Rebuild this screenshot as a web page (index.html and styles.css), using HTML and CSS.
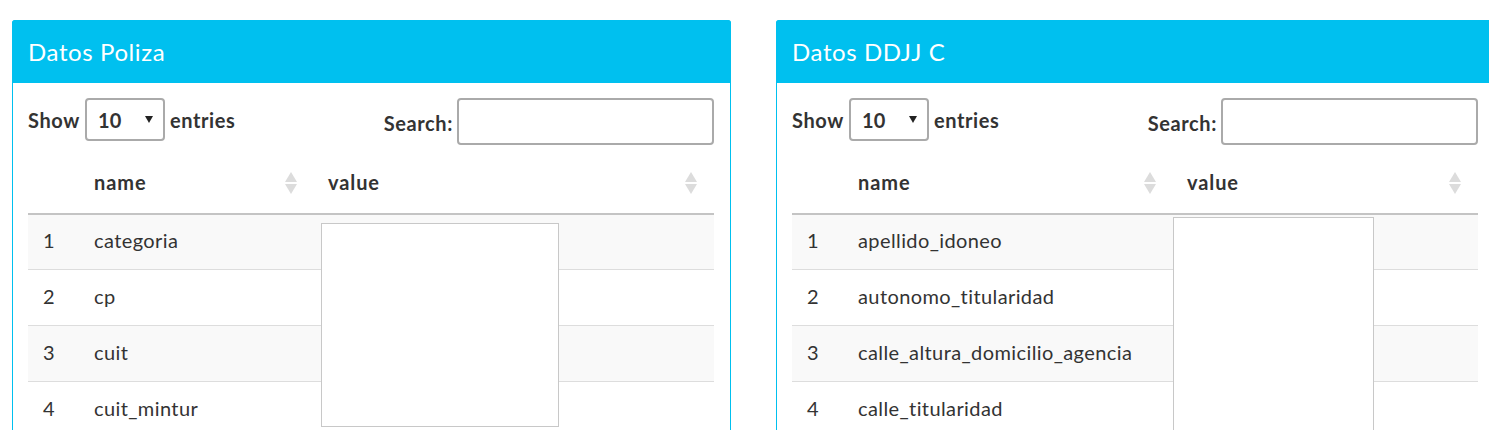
FILE: index.html
```html
<!DOCTYPE html>
<html lang="es">
<head>
<meta charset="utf-8">
<title>Datos</title>
<link rel="stylesheet" href="styles.css">
</head>
<body>
<div class="page">
  <section class="box box-a">
    <div class="box-header"><h3 class="box-title">Datos Poliza</h3></div>
    <div class="box-body">
      <div class="dt-top">
        <label class="dt-length">Show <span class="select">10 <svg class="caret" width="8" height="7" viewBox="0 0 8 7"><path d="M0 0H8L4 7Z"/></svg></span> entries</label>
        <label class="dt-search">Search: <span class="search-input"></span></label>
      </div>
      <div class="table-wrap">
        <table class="dt">
          <colgroup><col class="c-idx"><col class="c-name-a"><col class="c-val"></colgroup>
          <thead>
            <tr><th></th><th class="sortable">name<svg class="sort" width="12" height="22" viewBox="0 0 12 22"><path d="M6 0L12 10H0Z"/><path d="M0 12H12L6 22Z"/></svg></th><th class="sortable">value<svg class="sort" width="12" height="22" viewBox="0 0 12 22"><path d="M6 0L12 10H0Z"/><path d="M0 12H12L6 22Z"/></svg></th></tr>
          </thead>
          <tbody>
            <tr class="odd"><td>1</td><td>categoria</td><td></td></tr>
            <tr><td>2</td><td>cp</td><td></td></tr>
            <tr class="odd"><td>3</td><td>cuit</td><td></td></tr>
            <tr><td>4</td><td>cuit_mintur</td><td></td></tr>
          </tbody>
        </table>
        <div class="widget widget-a"></div>
      </div>
    </div>
  </section>
  <section class="box box-b">
    <div class="box-header"><h3 class="box-title">Datos DDJJ C</h3></div>
    <div class="box-body">
      <div class="dt-top">
        <label class="dt-length">Show <span class="select">10 <svg class="caret" width="8" height="7" viewBox="0 0 8 7"><path d="M0 0H8L4 7Z"/></svg></span> entries</label>
        <label class="dt-search">Search: <span class="search-input"></span></label>
      </div>
      <div class="table-wrap">
        <table class="dt">
          <colgroup><col class="c-idx"><col class="c-name-b"><col class="c-val"></colgroup>
          <thead>
            <tr><th></th><th class="sortable">name<svg class="sort" width="12" height="22" viewBox="0 0 12 22"><path d="M6 0L12 10H0Z"/><path d="M0 12H12L6 22Z"/></svg></th><th class="sortable">value<svg class="sort" width="12" height="22" viewBox="0 0 12 22"><path d="M6 0L12 10H0Z"/><path d="M0 12H12L6 22Z"/></svg></th></tr>
          </thead>
          <tbody>
            <tr class="odd"><td>1</td><td>apellido_idoneo</td><td></td></tr>
            <tr><td>2</td><td>autonomo_titularidad</td><td></td></tr>
            <tr class="odd"><td>3</td><td>calle_altura_domicilio_agencia</td><td></td></tr>
            <tr><td>4</td><td>calle_titularidad</td><td></td></tr>
          </tbody>
        </table>
        <div class="widget widget-b"></div>
      </div>
    </div>
  </section>
</div>
</body>
</html>
```
FILE: styles.css
```css
html, body {
  margin: 0;
  padding: 0;
  overflow: hidden;
  background: #fff;
}
body {
  font-family: Lato, "Liberation Sans", sans-serif;
  color: #333;
  font-size: 20px;
  letter-spacing: 0.4px;
}
.page {
  display: flex;
  gap: 45px;
  padding: 20px 0 0 12px;
  width: 1600px;
}
.box {
  flex: 0 0 719px;
  box-sizing: border-box;
  border: 1px solid #00c0ef;
  border-radius: 3px 3px 0 0;
  background: #fff;
}
.box-header {
  background: #00c0ef;
  height: 63px;
  display: flex;
  align-items: center;
  padding: 0 15px;
  margin: -1px -1px 0;
  border-radius: 3px 3px 0 0;
}
.box-title {
  margin: 0 0 1px;
  font-weight: 400;
  font-size: 24px;
  letter-spacing: 0.6px;
  color: #fff;
  padding-left: 1px;
}
.box-body {
  padding: 15px 16px 0 15px;
}
.dt-top {
  display: flex;
  justify-content: space-between;
  align-items: flex-start;
  height: 47px;
}
.dt-length, .dt-search {
  display: flex;
  align-items: center;
  font-weight: 700;
  letter-spacing: 0.6px;
  gap: 5px;
}
.dt-length { height: 43px; }
.dt-search { height: 47px; gap: 4px; padding-top: 2px; box-sizing: border-box; }
.select {
  box-sizing: border-box;
  width: 80px;
  height: 43px;
  border: 2px solid #aaa;
  border-radius: 4px;
  display: flex;
  align-items: center;
  justify-content: space-between;
  padding: 0 10px 0 11px;
  font-weight: 700;
  letter-spacing: 0.2px;
}
.caret { fill: #222; }
.search-input {
  box-sizing: border-box;
  width: 257px;
  height: 47px;
  border: 2px solid #aaa;
  border-radius: 4px;
  margin-top: -2px;
}
.table-wrap {
  position: relative;
  margin-top: 7px;
}
.dt {
  width: 100%;
  table-layout: fixed;
  border-collapse: collapse;
}
.c-idx { width: 52px; }
.c-name-a { width: 234px; }
.c-name-b { width: 329px; }
.dt th {
  height: 62px;
  padding: 0 14px 2px;
  text-align: left;
  font-weight: 700;
  letter-spacing: 0.9px;
  border-bottom: 2px solid #c4c4c4;
  box-sizing: border-box;
}
.dt th.sortable { position: relative; }
.sort {
  position: absolute;
  right: 17px;
  top: 20px;
  fill: #dcdcdc;
}
.dt td {
  height: 56px;
  padding: 0 14px 3px;
  box-sizing: border-box;
  border-top: 1px solid #ddd;
  white-space: nowrap;
}
.dt td:first-child { padding-left: 15px; }
.dt tbody tr:first-child td { border-top: 0; height: 55px; }
.dt tr.odd td { background: #f9f9f9; }
.widget {
  position: absolute;
  box-sizing: border-box;
  background: #fff;
  border: 1px solid #c8c8c8;
}
.widget-a {
  left: 293px;
  top: 71px;
  width: 238px;
  height: 204px;
}
.widget-b {
  left: 381px;
  top: 65px;
  width: 201px;
  height: 240px;
}
```
